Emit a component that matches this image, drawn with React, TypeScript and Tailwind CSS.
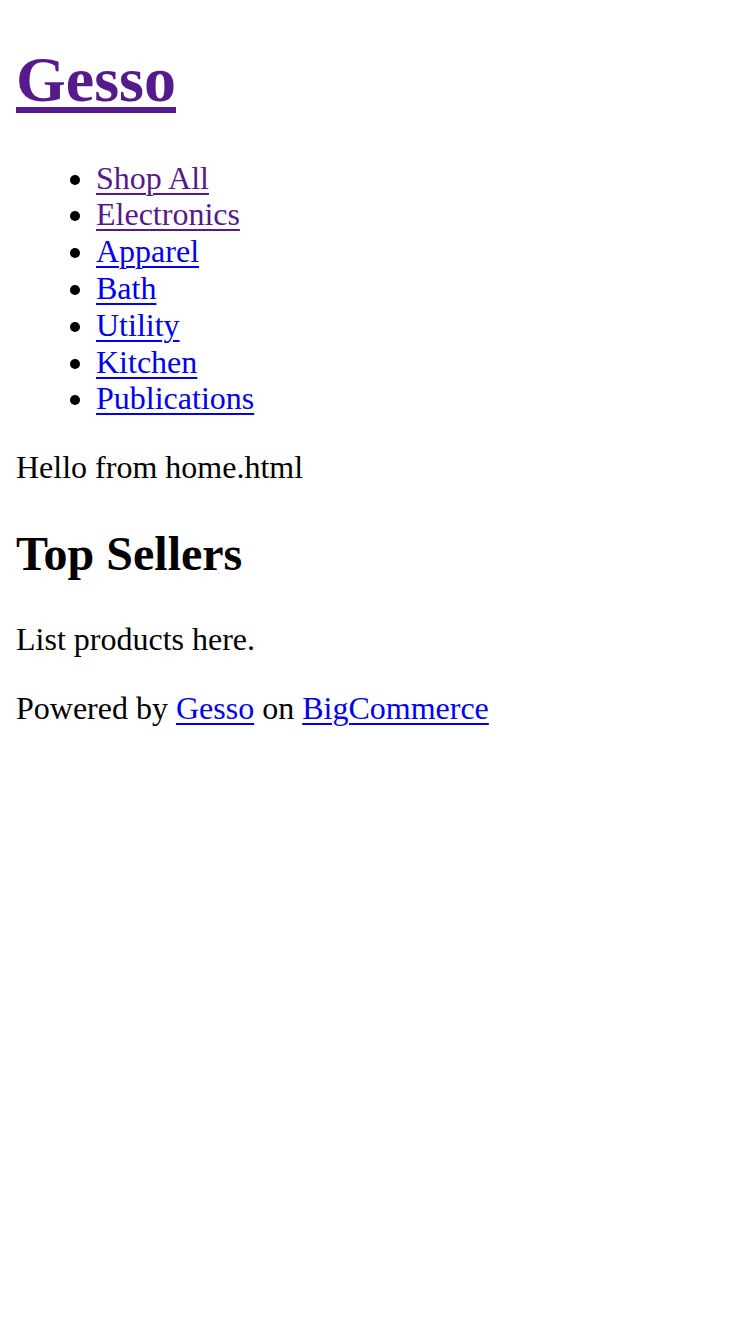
// Plain storefront home page (default browser styles, rendered at 2x)

const visited = "text-[#551a8b]";
const unvisited = "text-[#0000ee]";

const navItems = [
  { label: "Shop All", seen: true },
  { label: "Electronics", seen: true },
  { label: "Apparel", seen: false },
  { label: "Bath", seen: false },
  { label: "Utility", seen: false },
  { label: "Kitchen", seen: false },
  { label: "Publications", seen: false },
];

export default function App() {
  return (
    <div
      className="min-h-[1332px] bg-white px-4 text-[32px] leading-[1.15] text-black"
      style={{ fontFamily: '"Liberation Serif", "Times New Roman", serif' }}
    >
      {/* Header */}
      <h1 className="pt-[43px] text-[64px] font-bold leading-[1.15]">
        <a href="#" className={`${visited} underline decoration-[6px] underline-offset-[6px]`}>
          Gesso
        </a>
      </h1>

      <ul className="mt-[43px] list-disc pl-20">
        {navItems.map((item) => (
          <li key={item.label}>
            <a
              href="#"
              className={`${item.seen ? visited : unvisited} underline decoration-2 underline-offset-[4px]`}
            >
              {item.label}
            </a>
          </li>
        ))}
      </ul>

      {/* Main content */}
      <p className="mt-8">Hello from home.html</p>

      <h2 className="mt-10 text-[48px] font-bold leading-[1.15]">Top Sellers</h2>

      <p className="mt-10">List products here.</p>

      {/* Footer */}
      <p className="mt-8">
        Powered by{" "}
        <a href="#" className={`${unvisited} underline decoration-2 underline-offset-[4px]`}>
          Gesso
        </a>{" "}
        on{" "}
        <a href="#" className={`${unvisited} underline decoration-2 underline-offset-[4px]`}>
          BigCommerce
        </a>
      </p>
    </div>
  );
}
